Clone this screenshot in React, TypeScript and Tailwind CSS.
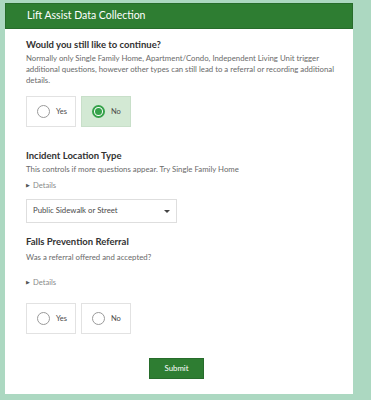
import React, { useState } from 'react';

const font = { fontFamily: 'Lato, "Open Sans", sans-serif' };

type RadioOptionProps = {
  label: string;
  checked: boolean;
  onSelect: () => void;
};

const RadioOption: React.FC<RadioOptionProps> = ({ label, checked, onSelect }) => (
  <button
    type="button"
    onClick={onSelect}
    className={
      checked
        ? 'w-[50px] h-[31px] flex items-center gap-[6px] pl-[10px] border border-[#c8dfc9] bg-[#d3e9d4]'
        : 'w-[50px] h-[31px] flex items-center gap-[6px] pl-[10px] border border-[#e2e2e2] bg-white'
    }
  >
    {checked ? (
      <span className="w-[13px] h-[13px] rounded-full border-2 border-[#35a24a] flex items-center justify-center bg-white">
        <span className="w-[7px] h-[7px] rounded-full bg-[#35a24a]" />
      </span>
    ) : (
      <span className="w-[13px] h-[13px] rounded-full border border-[#9a9a9a] bg-white" />
    )}
    <span className="text-[7.5px] text-[#4a4a4a]">{label}</span>
  </button>
);

const Details: React.FC = () => (
  <div className="flex items-center gap-[3px] text-[7.6px] text-[#8a8a8a] leading-[10px]">
    <span className="text-[5px] text-[#555]">▶</span>
    <span>Details</span>
  </div>
);

const App: React.FC = () => {
  const [cont, setCont] = useState<'yes' | 'no'>('no');
  const [referral, setReferral] = useState<'yes' | 'no' | null>(null);

  return (
    <div className="w-[371px] h-[400px] bg-[#acd8c1] pt-[3px] pl-[5px] overflow-hidden" style={font}>
      <div className="w-[348px] h-[391px] bg-white flex flex-col">
        {/* header */}
        <div className="h-[26px] bg-[#2e7d32] border border-[#276c2b] flex items-center pl-[21px]">
          <span className="text-[10.5px] text-white">Lift Assist Data Collection</span>
        </div>

        <div className="pl-[21px] pr-[10px] flex flex-col">
          {/* question 1 */}
          <h2 className="mt-[10px] text-[9.5px] font-bold text-[#323232] leading-[12px]">Would you still like to continue?</h2>
          <p className="mt-[2px] text-[7.8px] leading-[11px] text-[#6a6a6a]">
            Normally only Single Family Home, Apartment/Condo, Independent Living Unit trigger additional questions, however other types can still lead to a referral or recording additional details.
          </p>
          <div className="mt-[10px] flex gap-[5px]">
            <RadioOption label="Yes" checked={cont === 'yes'} onSelect={() => setCont('yes')} />
            <RadioOption label="No" checked={cont === 'no'} onSelect={() => setCont('no')} />
          </div>

          {/* question 2 */}
          <h2 className="mt-[23px] text-[9.5px] font-bold text-[#323232] leading-[12px]">Incident Location Type</h2>
          <p className="mt-[2px] text-[7.8px] leading-[11px] text-[#6a6a6a]">
            This controls if more questions appear. Try Single Family Home
          </p>
          <div className="mt-[5px]">
            <Details />
          </div>
          <div className="mt-[9px] w-[151px] h-[24px] border border-[#dedede] flex items-center justify-between pl-[6px] pr-[6px]">
            <span className="text-[7.8px] text-[#4a4a4a]">Public Sidewalk or Street</span>
            <span className="w-0 h-0 border-l-[3px] border-r-[3px] border-t-[3px] border-l-transparent border-r-transparent border-t-[#444]" />
          </div>

          {/* question 3 */}
          <h2 className="mt-[13px] text-[9.5px] font-bold text-[#323232] leading-[12px]">Falls Prevention Referral</h2>
          <p className="mt-[4px] text-[7.8px] leading-[11px] text-[#6a6a6a]">Was a referral offered and accepted?</p>
          <div className="mt-[14px]">
            <Details />
          </div>
          <div className="mt-[16px] flex gap-[5px]">
            <RadioOption label="Yes" checked={referral === 'yes'} onSelect={() => setReferral('yes')} />
            <RadioOption label="No" checked={referral === 'no'} onSelect={() => setReferral('no')} />
          </div>
        </div>

        <div className="mt-[24px] flex justify-center pr-[5px]">
          <button type="button" className="w-[55px] h-[21px] bg-[#2e7d32] border border-[#276c2b] text-white text-[7.8px]">
            Submit
          </button>
        </div>
      </div>
    </div>
  );
};

export default App;
